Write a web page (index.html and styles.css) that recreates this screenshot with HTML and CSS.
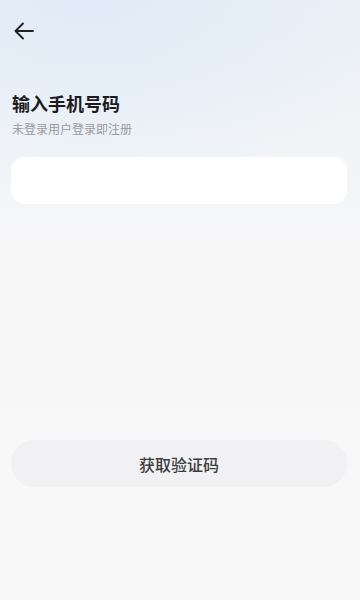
FILE: index.html
```html
<!DOCTYPE html>
<html lang="zh-CN">
<head>
    <meta charset="UTF-8">
    <meta name="viewport" content="width=device-width, initial-scale=1.0">
    <title>输入手机号码</title>
    <link rel="stylesheet" href="styles.css">
</head>
<body>
    <div class="page">
        <div class="top-bar">
            <button class="back-btn" aria-label="返回">
                <svg width="22" height="22" viewBox="0 0 22 22" fill="none">
                    <path d="M20 11H3M10 3.5L2.5 11L10 18.5" stroke="#222" stroke-width="1.9" stroke-linecap="round" stroke-linejoin="round"/>
                </svg>
            </button>
        </div>

        <div class="heading">
            <h1>输入手机号码</h1>
            <p>未登录用户登录即注册</p>
        </div>

        <div class="phone-field">
            <input type="tel" class="phone-input" aria-label="手机号码">
        </div>

        <div class="spacer"></div>

        <button class="code-btn">获取验证码</button>
    </div>
</body>
</html>
```

FILE: styles.css
```css
* {
    box-sizing: border-box;
}
html, body {
    margin: 0;
    padding: 0;
}
body {
    font-family: "Noto Sans CJK SC", "Noto Sans", sans-serif;
    background: #f8f8f8;
    min-height: 100vh;
}
.page {
    min-height: 600px;
    padding: 0 12px;
    display: flex;
    flex-direction: column;
    background:
        radial-gradient(ellipse 320px 200px at 25% 0%, rgba(223, 235, 248, 0.9), rgba(223, 235, 248, 0) 100%),
        linear-gradient(180deg, #ebf0f5 0%, #f2f4f6 25%, #f7f7f8 42%, #f8f8f8 100%);
}
.top-bar {
    height: 62px;
    display: flex;
    align-items: center;
}
.back-btn {
    background: none;
    border: none;
    padding: 0;
    width: 24px;
    height: 24px;
    display: flex;
    align-items: center;
    justify-content: center;
    cursor: pointer;
}
.heading {
    margin-top: 28px;
}
.heading h1 {
    margin: 0;
    font-size: 18px;
    line-height: 26px;
    font-weight: 700;
    color: #1c1c1e;
}
.heading p {
    margin: 4px 0 0;
    font-size: 12px;
    line-height: 18px;
    color: #9a9a9e;
}
.phone-field {
    margin-top: 19px;
    margin-left: -1px;
    margin-right: 1px;
}
.phone-input {
    width: 100%;
    height: 47px;
    border: none;
    border-radius: 14px;
    background: #ffffff;
    padding: 0 16px;
    font-size: 16px;
    outline: none;
}
.spacer {
    height: 236px;
}
.code-btn {
    margin-left: -1px;
    margin-right: 1px;
    height: 47px;
    border: none;
    border-radius: 24px;
    background: #f1f1f3;
    color: #3d3d40;
    font-family: "Noto Sans CJK SC", "Noto Sans", sans-serif;
    font-size: 16px;
    font-weight: 500;
    cursor: pointer;
}
```
